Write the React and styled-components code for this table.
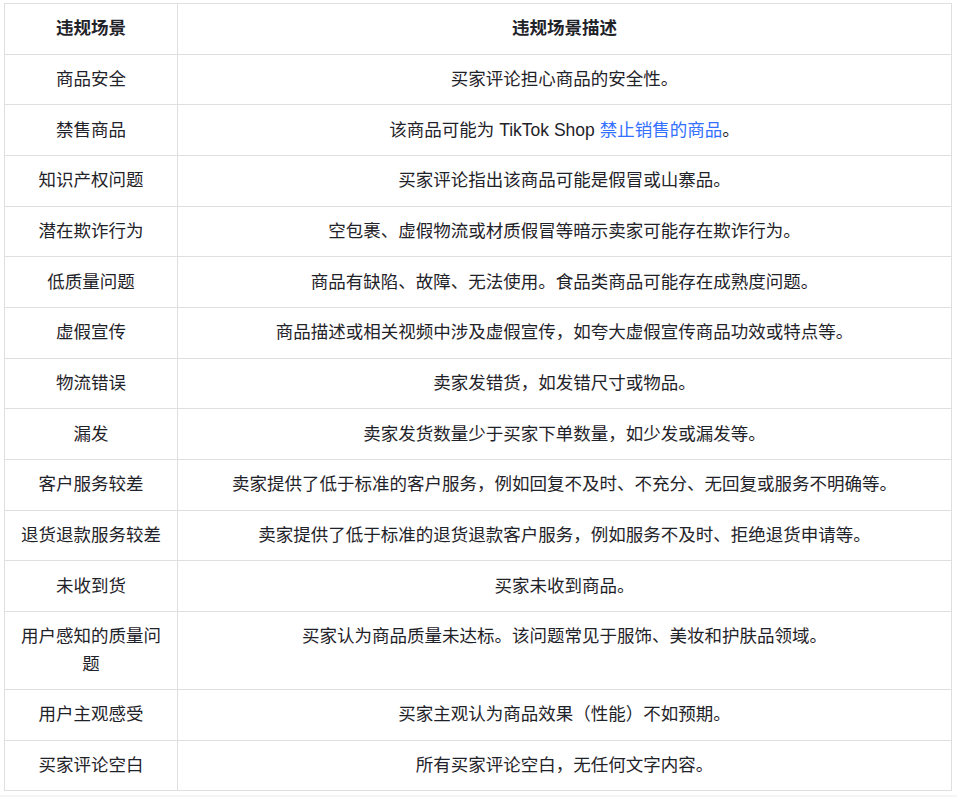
import React from "react";
import styled, { createGlobalStyle } from "styled-components";

const GlobalStyle = createGlobalStyle`
  html, body {
    margin: 0;
    padding: 0;
    background: #f5f5f5;
  }
  body {
    font-family: "Liberation Sans", "Noto Sans CJK SC", sans-serif;
    color: #1f2329;
  }
`;

const Page = styled.div`
  background: #fff;
  padding: 3px 5px 4px 4px;
`;

const Table = styled.table`
  width: 948px;
  border-collapse: collapse;
  table-layout: fixed;
  font-size: 17.5px;
  line-height: 27.3px;
`;

const Th = styled.th`
  border: 1px solid #dedfe0;
  padding: 11.2px 12px;
  font-weight: 700;
  text-align: center;
  vertical-align: top;
  color: #1f2329;
`;

const Td = styled.td`
  border: 1px solid #dedfe0;
  padding: 11.2px 12px;
  text-align: center;
  vertical-align: top;
  color: #1f2329;
`;

const Link = styled.span`
  color: #3370ff;
`;

const rows = [
  { scene: "商品安全", desc: "买家评论担心商品的安全性。" },
  {
    scene: "禁售商品",
    desc: (
      <>
        该商品可能为 TikTok Shop <Link>禁止销售的商品</Link>。
      </>
    ),
  },
  { scene: "知识产权问题", desc: "买家评论指出该商品可能是假冒或山寨品。" },
  { scene: "潜在欺诈行为", desc: "空包裹、虚假物流或材质假冒等暗示卖家可能存在欺诈行为。" },
  { scene: "低质量问题", desc: "商品有缺陷、故障、无法使用。食品类商品可能存在成熟度问题。" },
  { scene: "虚假宣传", desc: "商品描述或相关视频中涉及虚假宣传，如夸大虚假宣传商品功效或特点等。" },
  { scene: "物流错误", desc: "卖家发错货，如发错尺寸或物品。" },
  { scene: "漏发", desc: "卖家发货数量少于买家下单数量，如少发或漏发等。" },
  { scene: "客户服务较差", desc: "卖家提供了低于标准的客户服务，例如回复不及时、不充分、无回复或服务不明确等。" },
  { scene: "退货退款服务较差", desc: "卖家提供了低于标准的退货退款客户服务，例如服务不及时、拒绝退货申请等。" },
  { scene: "未收到货", desc: "买家未收到商品。" },
  { scene: "用户感知的质量问题", desc: "买家认为商品质量未达标。该问题常见于服饰、美妆和护肤品领域。" },
  { scene: "用户主观感受", desc: "买家主观认为商品效果（性能）不如预期。" },
  { scene: "买家评论空白", desc: "所有买家评论空白，无任何文字内容。" },
];

export default function App() {
  return (
    <>
      <GlobalStyle />
      <Page>
        <Table>
          <colgroup>
            <col style={{ width: 173 }} />
            <col />
          </colgroup>
          <thead>
            <tr>
              <Th>违规场景</Th>
              <Th>违规场景描述</Th>
            </tr>
          </thead>
          <tbody>
            {rows.map((r) => (
              <tr key={r.scene}>
                <Td>{r.scene}</Td>
                <Td>{r.desc}</Td>
              </tr>
            ))}
          </tbody>
        </Table>
      </Page>
    </>
  );
}
